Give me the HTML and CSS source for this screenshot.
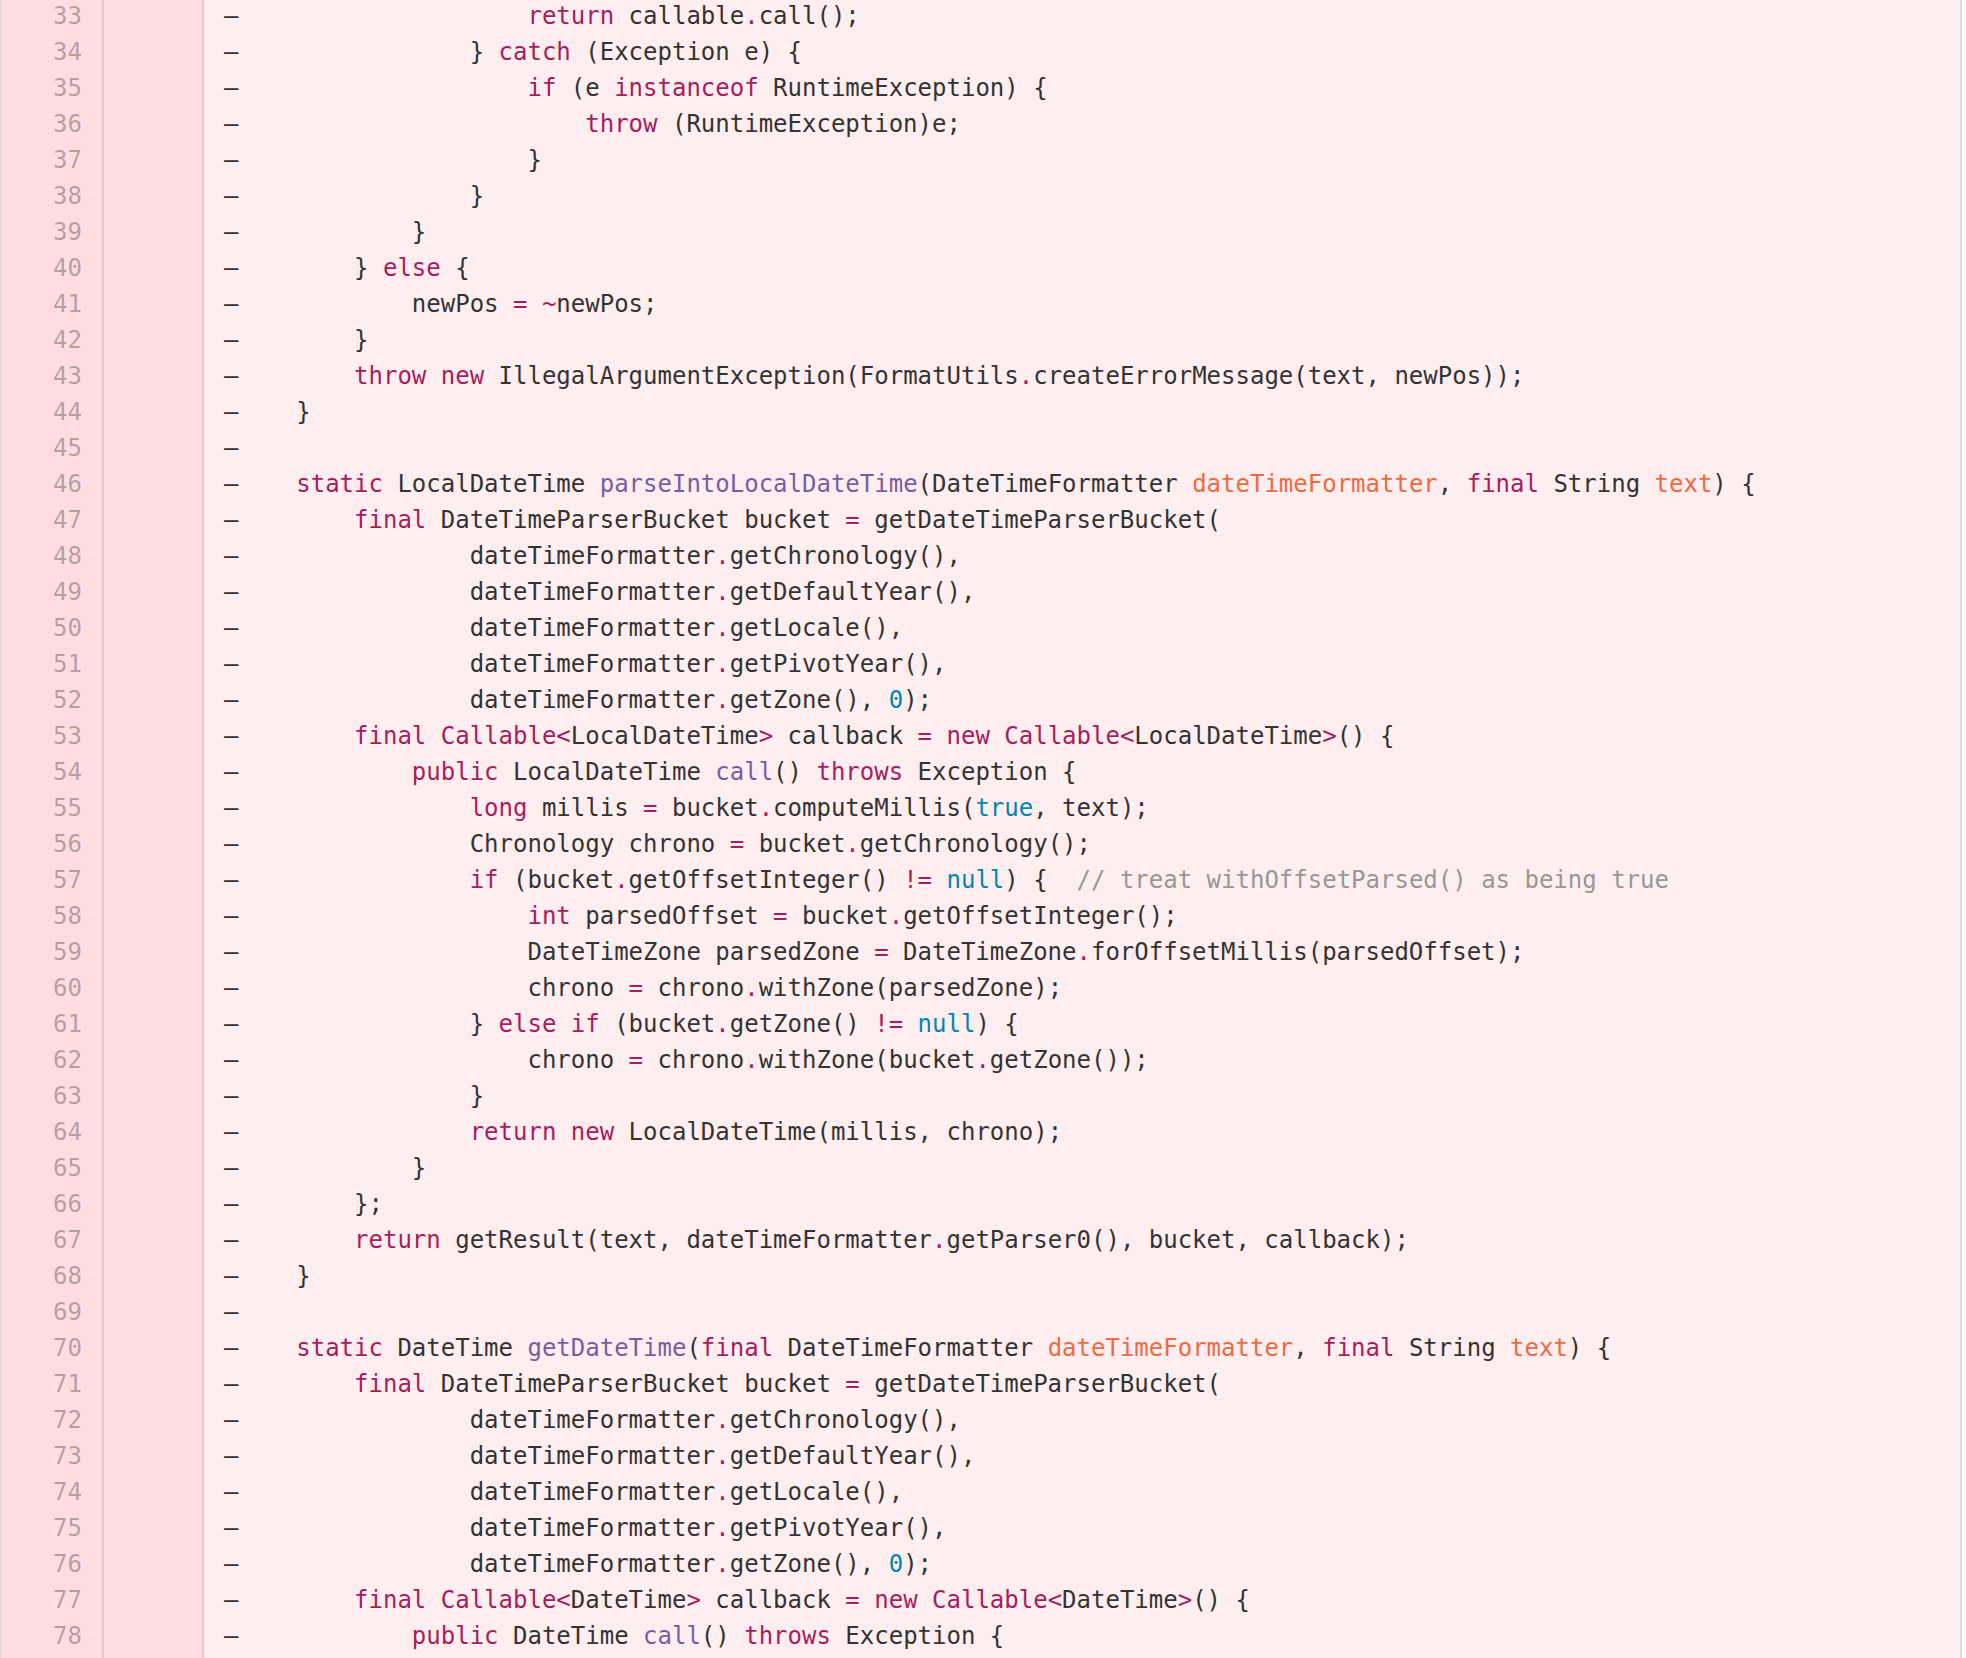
FILE: index.html
```html
<!DOCTYPE html>
<html>
<head>
<meta charset="utf-8">
<link rel="stylesheet" href="styles.css">
</head>
<body>
<div class="diff">
<table class="blob">
<tbody>
<tr><td class="num">33</td><td class="num"></td><td class="code"><span class="mk">–</span>                    <span class="k">return</span> callable<span class="k">.</span>call();</td></tr>
<tr><td class="num">34</td><td class="num"></td><td class="code"><span class="mk">–</span>                } <span class="k">catch</span> (Exception e) {</td></tr>
<tr><td class="num">35</td><td class="num"></td><td class="code"><span class="mk">–</span>                    <span class="k">if</span> (e <span class="k">instanceof</span> RuntimeException) {</td></tr>
<tr><td class="num">36</td><td class="num"></td><td class="code"><span class="mk">–</span>                        <span class="k">throw</span> (RuntimeException)e;</td></tr>
<tr><td class="num">37</td><td class="num"></td><td class="code"><span class="mk">–</span>                    }</td></tr>
<tr><td class="num">38</td><td class="num"></td><td class="code"><span class="mk">–</span>                }</td></tr>
<tr><td class="num">39</td><td class="num"></td><td class="code"><span class="mk">–</span>            }</td></tr>
<tr><td class="num">40</td><td class="num"></td><td class="code"><span class="mk">–</span>        } <span class="k">else</span> {</td></tr>
<tr><td class="num">41</td><td class="num"></td><td class="code"><span class="mk">–</span>            newPos <span class="k">=</span> <span class="k">~</span>newPos;</td></tr>
<tr><td class="num">42</td><td class="num"></td><td class="code"><span class="mk">–</span>        }</td></tr>
<tr><td class="num">43</td><td class="num"></td><td class="code"><span class="mk">–</span>        <span class="k">throw</span> <span class="k">new</span> IllegalArgumentException(FormatUtils<span class="k">.</span>createErrorMessage(text, newPos));</td></tr>
<tr><td class="num">44</td><td class="num"></td><td class="code"><span class="mk">–</span>    }</td></tr>
<tr><td class="num">45</td><td class="num"></td><td class="code"><span class="mk">–</span></td></tr>
<tr><td class="num">46</td><td class="num"></td><td class="code"><span class="mk">–</span>    <span class="k">static</span> LocalDateTime <span class="f">parseIntoLocalDateTime</span>(DateTimeFormatter <span class="p">dateTimeFormatter</span>, <span class="k">final</span> String <span class="p">text</span>) {</td></tr>
<tr><td class="num">47</td><td class="num"></td><td class="code"><span class="mk">–</span>        <span class="k">final</span> DateTimeParserBucket bucket <span class="k">=</span> getDateTimeParserBucket(</td></tr>
<tr><td class="num">48</td><td class="num"></td><td class="code"><span class="mk">–</span>                dateTimeFormatter<span class="k">.</span>getChronology(),</td></tr>
<tr><td class="num">49</td><td class="num"></td><td class="code"><span class="mk">–</span>                dateTimeFormatter<span class="k">.</span>getDefaultYear(),</td></tr>
<tr><td class="num">50</td><td class="num"></td><td class="code"><span class="mk">–</span>                dateTimeFormatter<span class="k">.</span>getLocale(),</td></tr>
<tr><td class="num">51</td><td class="num"></td><td class="code"><span class="mk">–</span>                dateTimeFormatter<span class="k">.</span>getPivotYear(),</td></tr>
<tr><td class="num">52</td><td class="num"></td><td class="code"><span class="mk">–</span>                dateTimeFormatter<span class="k">.</span>getZone(), <span class="n">0</span>);</td></tr>
<tr><td class="num">53</td><td class="num"></td><td class="code"><span class="mk">–</span>        <span class="k">final</span> <span class="k">Callable&lt;</span>LocalDateTime<span class="k">&gt;</span> callback <span class="k">=</span> <span class="k">new</span> <span class="k">Callable&lt;</span>LocalDateTime<span class="k">&gt;</span>() {</td></tr>
<tr><td class="num">54</td><td class="num"></td><td class="code"><span class="mk">–</span>            <span class="k">public</span> LocalDateTime <span class="f">call</span>() <span class="k">throws</span> Exception {</td></tr>
<tr><td class="num">55</td><td class="num"></td><td class="code"><span class="mk">–</span>                <span class="k">long</span> millis <span class="k">=</span> bucket<span class="k">.</span>computeMillis(<span class="n">true</span>, text);</td></tr>
<tr><td class="num">56</td><td class="num"></td><td class="code"><span class="mk">–</span>                Chronology chrono <span class="k">=</span> bucket<span class="k">.</span>getChronology();</td></tr>
<tr><td class="num">57</td><td class="num"></td><td class="code"><span class="mk">–</span>                <span class="k">if</span> (bucket<span class="k">.</span>getOffsetInteger() <span class="k">!=</span> <span class="n">null</span>) {  <span class="c">// treat withOffsetParsed() as being true</span></td></tr>
<tr><td class="num">58</td><td class="num"></td><td class="code"><span class="mk">–</span>                    <span class="k">int</span> parsedOffset <span class="k">=</span> bucket<span class="k">.</span>getOffsetInteger();</td></tr>
<tr><td class="num">59</td><td class="num"></td><td class="code"><span class="mk">–</span>                    DateTimeZone parsedZone <span class="k">=</span> DateTimeZone<span class="k">.</span>forOffsetMillis(parsedOffset);</td></tr>
<tr><td class="num">60</td><td class="num"></td><td class="code"><span class="mk">–</span>                    chrono <span class="k">=</span> chrono<span class="k">.</span>withZone(parsedZone);</td></tr>
<tr><td class="num">61</td><td class="num"></td><td class="code"><span class="mk">–</span>                } <span class="k">else</span> <span class="k">if</span> (bucket<span class="k">.</span>getZone() <span class="k">!=</span> <span class="n">null</span>) {</td></tr>
<tr><td class="num">62</td><td class="num"></td><td class="code"><span class="mk">–</span>                    chrono <span class="k">=</span> chrono<span class="k">.</span>withZone(bucket<span class="k">.</span>getZone());</td></tr>
<tr><td class="num">63</td><td class="num"></td><td class="code"><span class="mk">–</span>                }</td></tr>
<tr><td class="num">64</td><td class="num"></td><td class="code"><span class="mk">–</span>                <span class="k">return</span> <span class="k">new</span> LocalDateTime(millis, chrono);</td></tr>
<tr><td class="num">65</td><td class="num"></td><td class="code"><span class="mk">–</span>            }</td></tr>
<tr><td class="num">66</td><td class="num"></td><td class="code"><span class="mk">–</span>        };</td></tr>
<tr><td class="num">67</td><td class="num"></td><td class="code"><span class="mk">–</span>        <span class="k">return</span> getResult(text, dateTimeFormatter<span class="k">.</span>getParser0(), bucket, callback);</td></tr>
<tr><td class="num">68</td><td class="num"></td><td class="code"><span class="mk">–</span>    }</td></tr>
<tr><td class="num">69</td><td class="num"></td><td class="code"><span class="mk">–</span></td></tr>
<tr><td class="num">70</td><td class="num"></td><td class="code"><span class="mk">–</span>    <span class="k">static</span> DateTime <span class="f">getDateTime</span>(<span class="k">final</span> DateTimeFormatter <span class="p">dateTimeFormatter</span>, <span class="k">final</span> String <span class="p">text</span>) {</td></tr>
<tr><td class="num">71</td><td class="num"></td><td class="code"><span class="mk">–</span>        <span class="k">final</span> DateTimeParserBucket bucket <span class="k">=</span> getDateTimeParserBucket(</td></tr>
<tr><td class="num">72</td><td class="num"></td><td class="code"><span class="mk">–</span>                dateTimeFormatter<span class="k">.</span>getChronology(),</td></tr>
<tr><td class="num">73</td><td class="num"></td><td class="code"><span class="mk">–</span>                dateTimeFormatter<span class="k">.</span>getDefaultYear(),</td></tr>
<tr><td class="num">74</td><td class="num"></td><td class="code"><span class="mk">–</span>                dateTimeFormatter<span class="k">.</span>getLocale(),</td></tr>
<tr><td class="num">75</td><td class="num"></td><td class="code"><span class="mk">–</span>                dateTimeFormatter<span class="k">.</span>getPivotYear(),</td></tr>
<tr><td class="num">76</td><td class="num"></td><td class="code"><span class="mk">–</span>                dateTimeFormatter<span class="k">.</span>getZone(), <span class="n">0</span>);</td></tr>
<tr><td class="num">77</td><td class="num"></td><td class="code"><span class="mk">–</span>        <span class="k">final</span> <span class="k">Callable&lt;</span>DateTime<span class="k">&gt;</span> callback <span class="k">=</span> <span class="k">new</span> <span class="k">Callable&lt;</span>DateTime<span class="k">&gt;</span>() {</td></tr>
<tr><td class="num">78</td><td class="num"></td><td class="code"><span class="mk">–</span>            <span class="k">public</span> DateTime <span class="f">call</span>() <span class="k">throws</span> Exception {</td></tr>
<tr><td class="num"></td><td class="num"></td><td class="code"></td></tr>
</tbody>
</table>
</div>
</body>
</html>
```
FILE: styles.css
```css
html, body {
  margin: 0;
  padding: 0;
  background: #ffffff;
  overflow: hidden;
}

.diff {
  width: 1958px;
  margin-top: -2px;
  border-left: 2px solid #dddddd;
  border-right: 2px solid #dddddd;
}

.blob {
  width: 100%;
  border-collapse: collapse;
  border-spacing: 0;
  table-layout: fixed;
  font-family: "DejaVu Sans Mono", "Liberation Mono", monospace;
  font-size: 24px;
  line-height: 36px;
  color: #333333;
}

.blob td {
  padding: 0;
  height: 36px;
  vertical-align: top;
}

.num {
  width: 80px;
  padding: 0 20px 0 0 !important;
  text-align: right;
  background: #ffdce0;
  color: rgba(0, 0, 0, 0.3);
  border-right: 2px solid #f1c0c0;
}

.num + .num {
  width: 78px;
}

.code {
  padding: 0 20px !important;
  background: #ffeef0;
  white-space: pre;
  overflow: hidden;
}

.k { color: #a71d5d; }
.f { color: #795da3; }
.p { color: #ed6a43; }
.n { color: #0086b3; }
.c { color: #969896; }
.mk { color: #333333; }
```
